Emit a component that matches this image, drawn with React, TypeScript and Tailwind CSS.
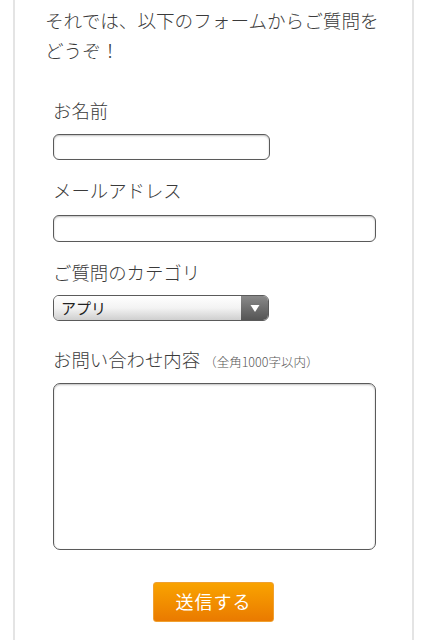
import React from "react";

const font = { fontFamily: '"Noto Sans CJK JP", "Noto Sans", sans-serif' };

export default function App() {
  return (
    <div className="w-[427px] h-[640px] bg-white overflow-hidden text-[#444]" style={font}>
      <div className="mx-[13px] h-full border-x-2 border-[#e4e4e4]">
        <p className="pl-[30px] pt-[5px] text-[18.6px] leading-[30px] font-light text-[#3a3a3a]">
          それでは、以下のフォームからご質問を
          <br />
          どうぞ！
        </p>
        <div className="pl-[38px] flex flex-col items-start">
          <label className="mt-[33px] text-[18.4px] leading-[24px] font-light text-[#3a3a3a]">お名前</label>
          <div className="mt-[12px] w-[217px] h-[26px] rounded-[6px] border-[1.5px] border-[#5a5a5a] bg-white shadow-[inset_0_1px_2px_rgba(0,0,0,0.25)]" />
          <label className="mt-[18px] text-[18.4px] leading-[24px] font-light text-[#3a3a3a]">メールアドレス</label>
          <div className="mt-[13px] w-[323px] h-[27px] rounded-[6px] border-[1.5px] border-[#5a5a5a] bg-white shadow-[inset_0_1px_2px_rgba(0,0,0,0.25)]" />
          <label className="mt-[18px] text-[18.4px] leading-[24px] font-light text-[#3a3a3a]">ご質問のカテゴリ</label>
          <div className="mt-[11px] w-[216px] h-[26px] rounded-[6px] border-[1.5px] border-[#5a5a5a] overflow-hidden flex">
            <div className="flex-1 flex items-center pl-[7px] text-[15px] text-[#222] bg-gradient-to-b from-white via-[#f3f3f3] to-[#cfcfcf]">
              アプリ
            </div>
            <div className="w-[27px] flex items-center justify-center bg-gradient-to-b from-[#8a8a8a] to-[#555]">
              <svg width="10" height="9" viewBox="0 0 10 9">
                <polygon points="0.5,1 9.5,1 5,8" fill="#fff" />
              </svg>
            </div>
          </div>
          <div className="mt-[26px] flex items-baseline">
            <span className="text-[18.4px] leading-[24px] font-light text-[#3a3a3a]">お問い合わせ内容</span>
            <span className="ml-[4px] text-[12.5px] font-light text-[#555]">（全角1000字以内）</span>
          </div>
          <div className="mt-[11px] w-[323px] h-[167px] rounded-[7px] border-[1.5px] border-[#5a5a5a] bg-white shadow-[inset_0_1px_2px_rgba(0,0,0,0.25)]" />
        </div>
        <div className="flex justify-center mt-[32px]">
          <button className="w-[121px] h-[40px] rounded-[3px] border border-[#f0a030] bg-gradient-to-b from-[#f9a300] to-[#ea7a00] text-white text-[18px] tracking-[1px]" style={font}>
            送信する
          </button>
        </div>
      </div>
    </div>
  );
}
